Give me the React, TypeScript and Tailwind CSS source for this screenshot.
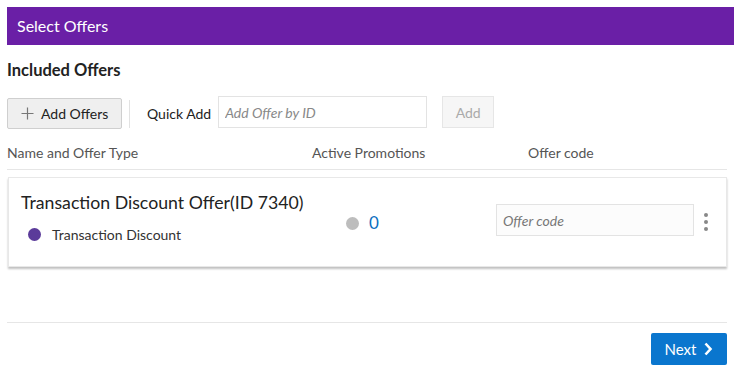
import React from 'react';

const font = { fontFamily: 'Lato, "Open Sans", sans-serif' };

const App = () => {
  return (
    <div className="w-[734px] h-[376px] bg-white pt-[7px] pl-[7px] text-[#333]" style={font}>
      <div className="h-[38px] bg-[#6a1fa6] flex items-center pl-[10px]">
        <span className="text-white text-[16px]">Select Offers</span>
      </div>

      <div className="mr-[7px]">
        <h2 className="mt-[15px] h-[20px] text-[16.5px] font-bold text-[#222] leading-[20px]">Included Offers</h2>

        {/* toolbar */}
        <div className="mt-[16px] flex items-start h-[33px]">
          <button className="h-[31px] w-[115px] mt-[2px] flex items-center gap-[7px] pl-[13px] bg-[#efefef] border border-[#cfcfcf] rounded-[2px] text-[14px] text-[#222]">
            <svg width="13" height="13" viewBox="0 0 13 13" className="text-[#777]">
              <path d="M6.5 0.5v12M0.5 6.5h12" stroke="currentColor" strokeWidth="1.2" fill="none" />
            </svg>
            Add Offers
          </button>
          <div className="w-px h-[28px] bg-[#e2e2e2] ml-[7px] mt-[4px]" />
          <span className="ml-[17px] mt-[8px] text-[14px] leading-[20px] text-[#222]">Quick Add</span>
          <input
            placeholder="Add Offer by ID"
            className="ml-[7px] w-[209px] h-[32px] border border-[#e3e3e3] bg-white px-[6px] text-[14px] italic placeholder:text-[#888] outline-none"
          />
          <button className="ml-[15px] w-[52px] h-[32px] bg-[#f6f6f6] border border-[#e6e6e6] text-[14px] text-[#aaa]">
            Add
          </button>
        </div>

        {/* column headers */}
        <div className="mt-[13px] flex text-[14px] text-[#555] h-[22px] leading-[22px]">
          <span className="w-[305px]">Name and Offer Type</span>
          <span className="w-[216px]">Active Promotions</span>
          <span>Offer code</span>
        </div>
        <div className="mt-[5px] h-px bg-[#e6e6e6]" />

        {/* card */}
        <div className="mt-[7px] ml-px h-[90px] bg-white border border-[#e8e8e8] shadow-[0_2px_2px_rgba(0,0,0,0.25)] flex items-start">
          <div className="w-[330px] pl-[12px] pt-[13px]">
            <div className="text-[17.7px] text-[#222] leading-[24px]">Transaction Discount Offer(ID 7340)</div>
            <div className="mt-[9px] h-[20px] flex items-center gap-[11px] pl-[7px] text-[14px] text-[#333]">
              <span className="w-[13px] h-[13px] rounded-full bg-[#5b3b9a]" />
              Transaction Discount
            </div>
          </div>
          <div className="w-[157px] mt-[33px] h-[24px] flex items-center gap-[10px] pl-[7px]">
            <span className="w-[13px] h-[13px] rounded-full bg-[#bdbdbd]" />
            <span className="text-[17px] text-[#0a6fbf]">0</span>
          </div>
          <input
            placeholder="Offer code"
            className="mt-[26px] w-[198px] h-[32px] border border-[#e3e3e3] bg-[#fcfcfc] px-[6px] text-[14px] italic placeholder:text-[#777] outline-none"
          />
          <div className="ml-[10px] mt-[35px] flex flex-col gap-[3px] items-center">
            <span className="w-[4px] h-[4px] rounded-full bg-[#888]" />
            <span className="w-[4px] h-[4px] rounded-full bg-[#888]" />
            <span className="w-[4px] h-[4px] rounded-full bg-[#888]" />
          </div>
        </div>

        <div className="mt-[55px] h-px bg-[#e6e6e6]" />

        <div className="mt-[10px] flex justify-end">
          <button className="w-[76px] h-[32px] bg-[#0a76ce] rounded-[2px] text-white text-[15px] flex items-center justify-center gap-[8px]">
            Next
            <svg width="9" height="14" viewBox="0 0 9 14">
              <path d="M1.5 1.5l5 5.5-5 5.5" stroke="white" strokeWidth="2.6" fill="none" />
            </svg>
          </button>
        </div>
      </div>
    </div>
  );
};

export default App;
